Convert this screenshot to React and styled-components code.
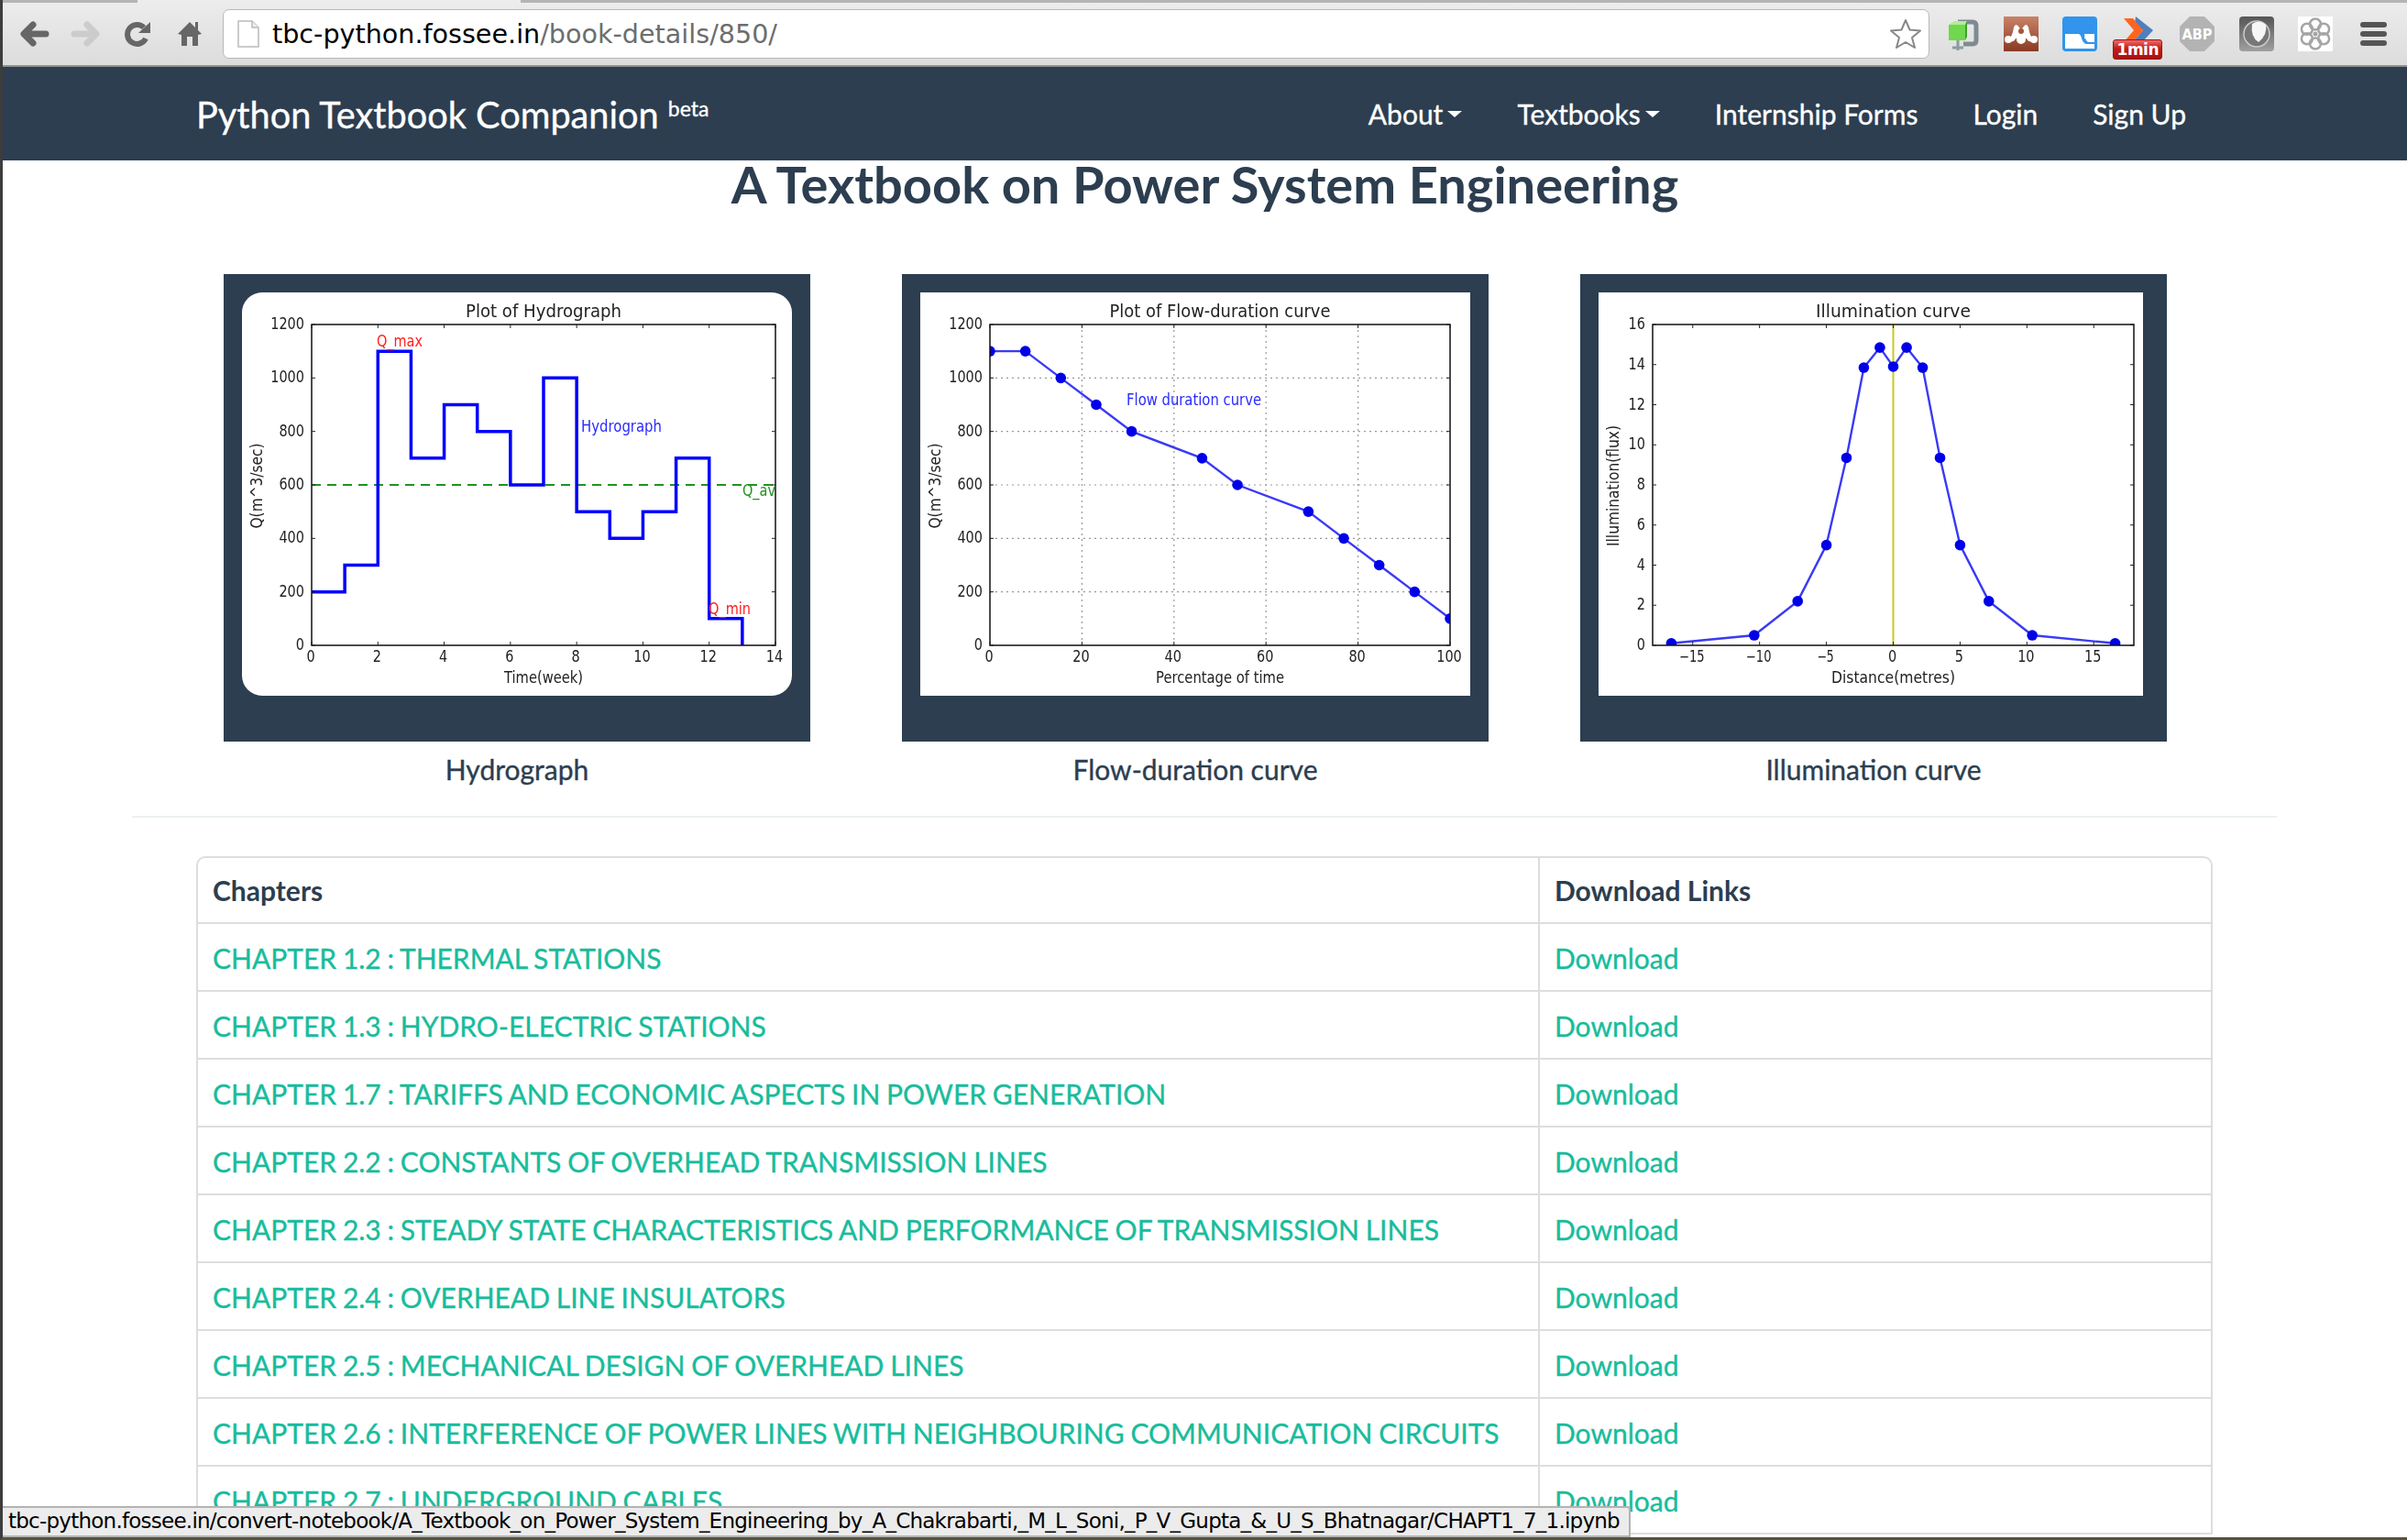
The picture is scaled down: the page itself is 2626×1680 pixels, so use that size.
import React from "react";
import styled, { createGlobalStyle, css } from "styled-components";

const NAVY = "#2c3e50";
const TEAL = "#18bc9c";

const chapters = [
  "CHAPTER 1.2 : THERMAL STATIONS",
  "CHAPTER 1.3 : HYDRO-ELECTRIC STATIONS",
  "CHAPTER 1.7 : TARIFFS AND ECONOMIC ASPECTS IN POWER GENERATION",
  "CHAPTER 2.2 : CONSTANTS OF OVERHEAD TRANSMISSION LINES",
  "CHAPTER 2.3 : STEADY STATE CHARACTERISTICS AND PERFORMANCE OF TRANSMISSION LINES",
  "CHAPTER 2.4 : OVERHEAD LINE INSULATORS",
  "CHAPTER 2.5 : MECHANICAL DESIGN OF OVERHEAD LINES",
  "CHAPTER 2.6 : INTERFERENCE OF POWER LINES WITH NEIGHBOURING COMMUNICATION CIRCUITS",
  "CHAPTER 2.7 : UNDERGROUND CABLES",
];

const hydroSteps = [200, 300, 1100, 700, 900, 800, 600, 1000, 500, 400, 500, 700, 100];
const flowPoints = [
  [0, 1100], [7.7, 1100], [15.4, 1000], [23.1, 900], [30.8, 800], [46.1, 700],
  [53.8, 600], [69.2, 500], [76.9, 400], [84.6, 300], [92.3, 200], [100, 100],
];
const halfCurve = [[16.6, 0.1], [10.4, 0.5], [7.15, 2.2], [5, 5], [3.5, 9.35], [2.2, 13.85], [1, 14.85]];
const illumPoints = [
  ...halfCurve.map(([x, y]) => [-x, y]),
  [0, 13.9],
  ...[...halfCurve].reverse(),
];

function Axes({ x0, x1, xMin, xMax, yMax, xTicks, yTicks, xTickFmt, title, xLabel, yLabel, titleW, xLabelW, yLabelW, grid, clipId, children }) {
  const y0 = 385;
  const y1 = 35;
  const sx = (v) => x0 + ((v - xMin) / (xMax - xMin)) * (x1 - x0);
  const sy = (v) => y0 - (v / yMax) * (y0 - y1);
  const midX = (x0 + x1) / 2;
  return (
    <>
      <defs>
        <clipPath id={clipId}>
          <rect x={x0} y={y1} width={x1 - x0} height={y0 - y1} />
        </clipPath>
      </defs>
      {grid && xTicks.slice(1, -1).map((t) => (
        <GridLine key={"gx" + t} x1={sx(t)} x2={sx(t)} y1={y1} y2={y0} />
      ))}
      {grid && yTicks.slice(1, -1).map((t) => (
        <GridLine key={"gy" + t} x1={x0} x2={x1} y1={sy(t)} y2={sy(t)} />
      ))}
      <g clipPath={`url(#${clipId})`}>{children(sx, sy)}</g>
      <Frame x={x0} y={y1} width={x1 - x0} height={y0 - y1} />
      {xTicks.map((t) => (
        <g key={"x" + t}>
          <Tick x1={sx(t)} x2={sx(t)} y1={y0} y2={y0 - 4} />
          <Tick x1={sx(t)} x2={sx(t)} y1={y1} y2={y1 + 4} />
          <TickLabel x={sx(t) - 1} y={403} textAnchor="middle" textLength={(xTickFmt ? xTickFmt(t) : String(t)).length * 9.2} lengthAdjust="spacingAndGlyphs">
            {xTickFmt ? xTickFmt(t) : t}
          </TickLabel>
        </g>
      ))}
      {yTicks.map((t) => (
        <g key={"y" + t}>
          <Tick x1={x0} x2={x0 + 4} y1={sy(t)} y2={sy(t)} />
          <Tick x1={x1} x2={x1 - 4} y1={sy(t)} y2={sy(t)} />
          <TickLabel x={x0 - 8} y={sy(t) + 5} textAnchor="end" textLength={String(t).length * 9.2} lengthAdjust="spacingAndGlyphs">
            {t}
          </TickLabel>
        </g>
      ))}
      <PlotTitle x={midX} y={27} textAnchor="middle" textLength={titleW} lengthAdjust="spacingAndGlyphs">{title}</PlotTitle>
      <TickLabel x={midX} y={426} textAnchor="middle" textLength={xLabelW} lengthAdjust="spacingAndGlyphs">{xLabel}</TickLabel>
      <TickLabel x={0} y={0} textAnchor="middle" transform="translate(22 211) rotate(-90)" textLength={yLabelW} lengthAdjust="spacingAndGlyphs">{yLabel}</TickLabel>
    </>
  );
}

function HydroChart() {
  return (
    <ChartSvg width="600" height="440" viewBox="0 0 600 440" role="img">
      <Axes
        clipId="hydro" x0={76} x1={582} xMin={0} xMax={14} yMax={1200}
        xTicks={[0, 2, 4, 6, 8, 10, 12, 14]} yTicks={[0, 200, 400, 600, 800, 1000, 1200]}
        title="Plot of Hydrograph" xLabel="Time(week)" yLabel="Q(m^3/sec)"
        titleW={170} xLabelW={86} yLabelW={93}
      >
        {(sx, sy) => {
          let d = `M${sx(0)} ${sy(hydroSteps[0])}`;
          hydroSteps.forEach((v, i) => {
            d += ` L${sx(i)} ${sy(v)} L${sx(i + 1)} ${sy(v)}`;
          });
          d += ` L${sx(13)} ${sy(0)}`;
          return (
            <>
              <path d={`M${sx(0)} ${sy(600)} H${sx(14)}`} stroke="#1f931f" strokeWidth="2" strokeDasharray="10 7" fill="none" />
              <path d={d} stroke="#0000ff" strokeWidth="3.5" fill="none" />
            </>
          );
        }}
      </Axes>
      <ChartNote $color="#ff2020" x={147} y={59} textLength={50} lengthAdjust="spacingAndGlyphs">Q_max</ChartNote>
      <ChartNote $color="#2a2aff" x={370} y={152} textLength={88} lengthAdjust="spacingAndGlyphs">Hydrograph</ChartNote>
      <ChartNote $color="#1f931f" x={546} y={222} textLength={36} lengthAdjust="spacingAndGlyphs">Q_av</ChartNote>
      <ChartNote $color="#ff2020" x={509} y={351} textLength={46} lengthAdjust="spacingAndGlyphs">Q_min</ChartNote>
    </ChartSvg>
  );
}

function MarkerLine({ points, sx, sy }) {
  return (
    <>
      <polyline points={points.map(([x, y]) => `${sx(x)},${sy(y)}`).join(" ")} fill="none" stroke="#3a3af5" strokeWidth="2.4" />
      {points.map(([x, y]) => (
        <circle key={x} cx={sx(x)} cy={sy(y)} r="5.8" fill="#0000e8" />
      ))}
    </>
  );
}

function FlowChart() {
  return (
    <ChartSvg width="600" height="440" viewBox="0 0 600 440" role="img">
      <Axes
        clipId="flow" grid x0={76} x1={578} xMin={0} xMax={100} yMax={1200}
        xTicks={[0, 20, 40, 60, 80, 100]} yTicks={[0, 200, 400, 600, 800, 1000, 1200]}
        title="Plot of Flow-duration curve" xLabel="Percentage of time" yLabel="Q(m^3/sec)"
        titleW={241} xLabelW={140} yLabelW={93}
      >
        {(sx, sy) => <MarkerLine points={flowPoints} sx={sx} sy={sy} />}
      </Axes>
      <ChartNote $color="#2a2aff" x={225} y={123} textLength={147} lengthAdjust="spacingAndGlyphs">Flow duration curve</ChartNote>
    </ChartSvg>
  );
}

function IllumChart() {
  return (
    <ChartSvg width="594" height="440" viewBox="0 0 594 440" role="img">
      <Axes
        clipId="illum" x0={59} x1={584} xMin={-18} xMax={18} yMax={16}
        xTicks={[-15, -10, -5, 0, 5, 10, 15]} yTicks={[0, 2, 4, 6, 8, 10, 12, 14, 16]}
        xTickFmt={(t) => String(t).replace("-", "\u2212")}
        title="Illumination curve" xLabel="Distance(metres)" yLabel="Illumination(flux)"
        titleW={169} xLabelW={135} yLabelW={132}
      >
        {(sx, sy) => (
          <>
            <path d={`M${sx(0)} 35 V385`} stroke="#c9c925" strokeWidth="2" />
            <MarkerLine points={illumPoints} sx={sx} sy={sy} />
          </>
        )}
      </Axes>
    </ChartSvg>
  );
}

const ClampIcon = () => (
  <svg width="38" height="38" viewBox="0 0 38 38">
    <path d="M14 6 H30 Q34 6 34 10 V26 Q34 30 30 30 H20" fill="none" stroke="#7f8b92" strokeWidth="5" />
    <rect x="4" y="9" width="18" height="17" fill="#6fd84c" />
    <path d="M4 9 L10 5 H24 L22 9 Z" fill="#b4ec9c" />
    <path d="M22 9 L24 5 V22 L22 26 Z" fill="#3f9f2d" />
    <path d="M14 26 V37 M8 34 H20" stroke="#8d9aa0" strokeWidth="3" />
  </svg>
);

const MendeleyIcon = () => (
  <svg width="38" height="38" viewBox="0 0 38 38">
    <defs>
      <linearGradient id="mend" x1="0" y1="0" x2="0" y2="1">
        <stop offset="0" stopColor="#c98468" />
        <stop offset="1" stopColor="#8a3a22" />
      </linearGradient>
    </defs>
    <rect width="38" height="38" fill="url(#mend)" />
    <path d="M4 24 Q9 25 11 12 Q13 6 17 12 Q19 15 21 12 Q25 6 27 12 Q29 25 34 24 V27 Q27 29 25 24 H13 Q11 29 4 27 Z" fill="#fff" />
    <circle cx="19" cy="25" r="5" fill="#fff" />
    <circle cx="19" cy="16" r="3" fill="#a8543a" />
    <circle cx="5" cy="25" r="4" fill="#fff" />
    <circle cx="33" cy="25" r="4" fill="#fff" />
  </svg>
);

const BlueIcon = () => (
  <svg width="38" height="38" viewBox="0 0 38 38">
    <rect width="38" height="38" rx="4" fill="#3294ec" />
    <path d="M3 19 H17 Q20 19 21 24 Q23 30 27 30 H35 V19 H25 L24 24 L35 24 V35 H3 Z" fill="#fff" />
    <path d="M24 19 H35 V28 H28 Q25 26 24 19 Z" fill="#fff" />
  </svg>
);

const ArrowsIcon = () => (
  <svg width="36" height="28" viewBox="0 0 36 28">
    <path d="M15 0 L34 15 L22 28 H12 L23 15 L14 7 Z" fill="#4f7fbe" />
    <path d="M2 2 H12 L23 15 L12 28 H2 L13 15 Z" fill="#ff6420" />
  </svg>
);

const AbpIcon = () => (
  <svg width="38" height="38" viewBox="0 0 38 38">
    <polygon points="11,0 27,0 38,11 38,27 27,38 11,38 0,27 0,11" fill="#b3b3b3" />
    <AbpText x="19" y="25" textAnchor="middle" textLength="33" lengthAdjust="spacingAndGlyphs">ABP</AbpText>
  </svg>
);

const DarkIcon = () => (
  <svg width="38" height="38" viewBox="0 0 38 38">
    <defs>
      <linearGradient id="dark" x1="0" y1="0" x2="0" y2="1">
        <stop offset="0" stopColor="#555" />
        <stop offset="1" stopColor="#a0a0a0" />
      </linearGradient>
    </defs>
    <rect width="38" height="38" rx="4" fill="url(#dark)" />
    <circle cx="19" cy="19" r="14" fill="#777" stroke="#ccc" strokeWidth="1.5" />
    <path d="M14 8 Q22 3 29 9 Q31 20 21 28 Q12 22 14 8 Z" fill="#f6f6f6" />
  </svg>
);

const FlowerIcon = () => (
  <svg width="38" height="38" viewBox="0 0 38 38">
    <rect width="38" height="38" fill="#fff" />
    {[0, 60, 120, 180, 240, 300].map((a) => (
      <circle
        key={a}
        cx={19 + 10.5 * Math.sin((a * Math.PI) / 180)}
        cy={19 - 10.5 * Math.cos((a * Math.PI) / 180)}
        r="6"
        fill="none"
        stroke="#a5a5a5"
        strokeWidth="2.5"
      />
    ))}
    <circle cx="19" cy="19" r="2.5" fill="#a5a5a5" />
  </svg>
);

export default function App() {
  return (
    <Page>
      <GlobalStyle />
      <TabStrip>
        <TabEdge />
        <TabEdge $active />
        <TabEdge />
      </TabStrip>

      <Toolbar>
        <NavButtons>
          <NavSlot>
            <svg width="33" height="28" viewBox="0 0 33 28">
              <path d="M29 14 H6 M15 4 L5 14 L15 24" fill="none" stroke="#666" strokeWidth="7" strokeLinecap="round" strokeLinejoin="round" />
            </svg>
          </NavSlot>
          <NavSlot>
            <svg width="33" height="28" viewBox="0 0 33 28">
              <path d="M4 14 H27 M18 4 L28 14 L18 24" fill="none" stroke="#ccc" strokeWidth="7" strokeLinecap="round" strokeLinejoin="round" />
            </svg>
          </NavSlot>
          <NavSlot>
            <svg width="29" height="28" viewBox="0 0 29 28">
              <path d="M21 7 A10.5 10.5 0 1 0 23 19" fill="none" stroke="#666" strokeWidth="6" />
              <polygon points="28,1 28,13 15,13" fill="#666" />
            </svg>
          </NavSlot>
          <NavSlot>
            <svg width="26" height="28" viewBox="0 0 26 28">
              <path d="M0 14 L13 1 L19 7 V1 H22 V10 L26 14 L22 15 V27 H16 V17 H10 V27 H4 V15 Z" fill="#666" />
            </svg>
          </NavSlot>
        </NavButtons>

        <UrlBar>
          <svg width="24" height="30" viewBox="0 0 24 30">
            <path d="M1 1 H16 L23 8 V29 H1 Z" fill="#fff" stroke="#bbb" strokeWidth="1.5" />
            <path d="M16 1 V8 H23" fill="#eee" stroke="#bbb" strokeWidth="1.5" />
          </svg>
          <UrlText>
            tbc-python.fossee.in<UrlPath>/book-details/850/</UrlPath>
          </UrlText>
          <StarIcon width="36" height="34" viewBox="0 0 36 34">
            <path d="M18 2 L22.5 12.5 L34 13.5 L25 21 L28 32 L18 26 L8 32 L11 21 L2 13.5 L13.5 12.5 Z" fill="#fff" stroke="#888" strokeWidth="2" strokeLinejoin="round" />
          </StarIcon>
        </UrlBar>

        <Extensions>
          <ExtSlot><ClampIcon /></ExtSlot>
          <ExtSlot><MendeleyIcon /></ExtSlot>
          <ExtSlot><BlueIcon /></ExtSlot>
          <ExtSlot>
            <BadgeWrap>
              <ArrowsIcon />
              <TimeBadge>1min</TimeBadge>
            </BadgeWrap>
          </ExtSlot>
          <ExtSlot><AbpIcon /></ExtSlot>
          <ExtSlot><DarkIcon /></ExtSlot>
          <ExtSlot><FlowerIcon /></ExtSlot>
          <ExtSlot>
            <Burger><i /><i /><i /></Burger>
          </ExtSlot>
        </Extensions>
      </Toolbar>

      <Navbar>
        <Brand>
          Python Textbook Companion <BrandTag>beta</BrandTag>
        </Brand>
        <NavLinks>
          <NavLink>About<Caret /></NavLink>
          <NavLink>Textbooks<Caret /></NavLink>
          <NavLink>Internship Forms</NavLink>
          <NavLink>Login</NavLink>
          <NavLink>Sign Up</NavLink>
        </NavLinks>
      </Navbar>

      <BookTitle>A Textbook on Power System Engineering</BookTitle>

      <Gallery>
        <Figure>
          <Panel>
            <PlotFrame $rounded><HydroChart /></PlotFrame>
          </Panel>
          <Caption>Hydrograph</Caption>
        </Figure>
        <Figure>
          <Panel>
            <PlotFrame><FlowChart /></PlotFrame>
          </Panel>
          <Caption>Flow-duration curve</Caption>
        </Figure>
        <Figure>
          <Panel>
            <PlotFrame><IllumChart /></PlotFrame>
          </Panel>
          <Caption>Illumination curve</Caption>
        </Figure>
      </Gallery>

      <Divider />

      <ChapterTable>
        <thead>
          <tr>
            <HeadCell>Chapters</HeadCell>
            <HeadCell $links>Download Links</HeadCell>
          </tr>
        </thead>
        <tbody>
          {chapters.map((c) => (
            <tr key={c}>
              <Cell><ChapterLink>{c}</ChapterLink></Cell>
              <Cell $links><ChapterLink>Download</ChapterLink></Cell>
            </tr>
          ))}
        </tbody>
      </ChapterTable>

      <StatusBubble>
        tbc-python.fossee.in/convert-notebook/A_Textbook_on_Power_System_Engineering_by_A_Chakrabarti,_M_L_Soni,_P_V_Gupta_&_U_S_Bhatnagar/CHAPT1_7_1.ipynb
      </StatusBubble>
    </Page>
  );
}

/* ========== styles ========== */

// the screenshot is Mac text, which sits heavier than Linux Lato
const heavier = css`
  -webkit-text-stroke: 0.35px currentColor;
`;

const GlobalStyle = createGlobalStyle`
  html, body {
    margin: 0;
    padding: 0;
    background: #fff;
  }
  * { box-sizing: border-box; }
`;

const Page = styled.div`
  position: relative;
  width: 2626px;
  height: 1680px;
  overflow: hidden;
  border-left: 3px solid #3d3d3d;
  border-bottom: 3px solid #57523a;
  background: #fff;
  font-family: Lato, "Open Sans", sans-serif;
  color: ${NAVY};
`;

const TabStrip = styled.div`
  display: grid;
  grid-template-columns: 147px 418px 1fr;
  height: 3px;
  background: #ececec;
`;

const TabEdge = styled.div`
  background: ${(p) => (p.$active ? "#ececec" : "#b4b4b4")};
`;

const Toolbar = styled.div`
  display: flex;
  align-items: center;
  height: 70px;
  padding-left: 6px;
  background: linear-gradient(#ececec, #dcdcdc);
  border-bottom: 2px solid #8f8f8f;
`;

const NavButtons = styled.div`
  display: flex;
  width: 234px;
  flex: none;
`;

const NavSlot = styled.div`
  display: flex;
  align-items: center;
  justify-content: center;
  width: 56.5px;
  height: 40px;
`;

const UrlBar = styled.div`
  display: flex;
  align-items: center;
  flex: none;
  width: 1862px;
  height: 54px;
  padding: 0 7px 0 15px;
  background: #fff;
  border: 1.5px solid #b8b8b8;
  border-radius: 7px;
`;

const UrlText = styled.div`
  flex: 1;
  margin-left: 14px;
  font-family: "DejaVu Sans", sans-serif;
  font-size: 28.6px;
  color: #000;
  white-space: nowrap;
`;

const UrlPath = styled.span`
  color: #6d6d6d;
`;

const StarIcon = styled.svg`
  flex: none;
`;

const Extensions = styled.div`
  display: grid;
  grid-template-columns: repeat(8, 64.1px);
  margin-left: 4px;
`;

const ExtSlot = styled.div`
  display: flex;
  align-items: center;
  justify-content: center;
  height: 38px;
`;

const BadgeWrap = styled.div`
  position: relative;
  width: 36px;
  height: 38px;
`;

const TimeBadge = styled.span`
  position: absolute;
  left: -10px;
  top: 25px;
  width: 54px;
  height: 22px;
  border-radius: 3px;
  border: 1px solid #a01010;
  background: linear-gradient(#ef6a66 0%, #c01c16 45%, #a91210 100%);
  color: #fff;
  font-family: "DejaVu Sans", sans-serif;
  font-weight: 700;
  font-size: 17px;
  line-height: 20px;
  letter-spacing: -0.5px;
  text-align: center;
`;

const AbpText = styled.text`
  font-family: "DejaVu Sans", sans-serif;
  font-weight: 700;
  font-size: 15px;
  fill: #fff;
`;

const Burger = styled.div`
  display: flex;
  flex-direction: column;
  gap: 4px;
  width: 29px;

  i {
    display: block;
    height: 6px;
    border-radius: 3px;
    background: #555;
  }
`;

const Navbar = styled.nav`
  display: flex;
  align-items: center;
  justify-content: space-between;
  height: 102px;
  padding: 0 241px 0 211px;
  background: ${NAVY};
  color: #fff;
`;

const Brand = styled.div`
  ${heavier}
  font-size: 39.7px;
  white-space: nowrap;
`;

const BrandTag = styled.sup`
  font-size: 23px;
  line-height: 0;
  vertical-align: 13px;
`;

const NavLinks = styled.div`
  display: flex;
  gap: 60px;
`;

const NavLink = styled.span`
  ${heavier}
  display: inline-flex;
  align-items: center;
  font-size: 30px;
  white-space: nowrap;
`;

const Caret = styled.i`
  display: inline-block;
  width: 0;
  height: 0;
  margin-left: 5px;
  border-left: 8px solid transparent;
  border-right: 8px solid transparent;
  border-top: 7px solid #fff;
`;

const BookTitle = styled.h1`
  height: 124px;
  margin: 0;
  font-size: 56px;
  font-weight: 700;
  line-height: 52px;
  text-align: center;
  color: ${NAVY};
`;

const Gallery = styled.div`
  display: flex;
  gap: 100px;
  padding-left: 241px;
`;

const Figure = styled.figure`
  display: flex;
  flex-direction: column;
  align-items: center;
  width: 640px;
  margin: 0;
`;

const Panel = styled.div`
  width: 640px;
  height: 510px;
  padding: 20px;
  background: ${NAVY};
`;

const PlotFrame = styled.div`
  width: fit-content;
  height: 440px;
  background: #fff;
  border-radius: ${(p) => (p.$rounded ? "22px" : "0")};
`;

const ChartSvg = styled.svg`
  display: block;
  filter: blur(0.55px);
`;

const Frame = styled.rect`
  fill: none;
  stroke: #111;
  stroke-width: 1.5;
`;

const Tick = styled.line`
  stroke: #222;
  stroke-width: 1;
`;

const GridLine = styled.line`
  stroke: #999;
  stroke-width: 1.2;
  stroke-dasharray: 2 4;
`;

const TickLabel = styled.text`
  font-family: "DejaVu Sans", sans-serif;
  font-size: 17px;
  fill: #222;
`;

const PlotTitle = styled.text`
  font-family: "DejaVu Sans", sans-serif;
  font-size: 20px;
  fill: #222;
`;

const ChartNote = styled.text`
  font-family: "DejaVu Sans", sans-serif;
  font-size: 17px;
  fill: ${(p) => p.$color};
`;

const Caption = styled.figcaption`
  ${heavier}
  margin-top: 12px;
  font-size: 30px;
  line-height: 36px;
  color: ${NAVY};
`;

const Divider = styled.hr`
  height: 2px;
  margin: 33px 142px 42px 141px;
  border: 0;
  background: #ecf0f1;
`;

const ChapterTable = styled.table`
  width: 2200px;
  margin-left: 211px;
  border-collapse: separate;
  border-spacing: 0;
  table-layout: fixed;
  border-top: 2px solid #ddd;
  border-right: 2px solid #ddd;
  border-left: 2px solid #ddd;
  border-radius: 10px 10px 0 0;
`;

const HeadCell = styled.th`
  height: 72px;
  padding: 0 16px;
  width: ${(p) => (p.$links ? "734px" : "auto")};
  border-left: ${(p) => (p.$links ? "2px solid #ddd" : "0")};
  border-bottom: 2px solid #ddd;
  font-size: 30px;
  font-weight: 700;
  text-align: left;
  color: ${NAVY};
`;

const Cell = styled.td`
  height: 74px;
  padding: 2px 16px 0;
  border-left: ${(p) => (p.$links ? "2px solid #ddd" : "0")};
  border-bottom: 2px solid #ddd;
  font-size: 30px;
  word-spacing: -0.9px;
  white-space: nowrap;
`;

const ChapterLink = styled.a`
  ${heavier}
  color: ${TEAL};
`;

const StatusBubble = styled.div`
  position: absolute;
  left: 0;
  bottom: 0;
  width: 1776px;
  height: 34px;
  padding-left: 6px;
  background: #ececec;
  border-top: 2px solid #b3b3b3;
  border-right: 2px solid #b3b3b3;
  border-bottom: 2px solid #b3b3b3;
  border-top-right-radius: 4px;
  font-family: "DejaVu Sans", sans-serif;
  font-size: 23px;
  letter-spacing: -0.76px;
  line-height: 29px;
  color: #000;
  white-space: nowrap;
  overflow: hidden;
`;
